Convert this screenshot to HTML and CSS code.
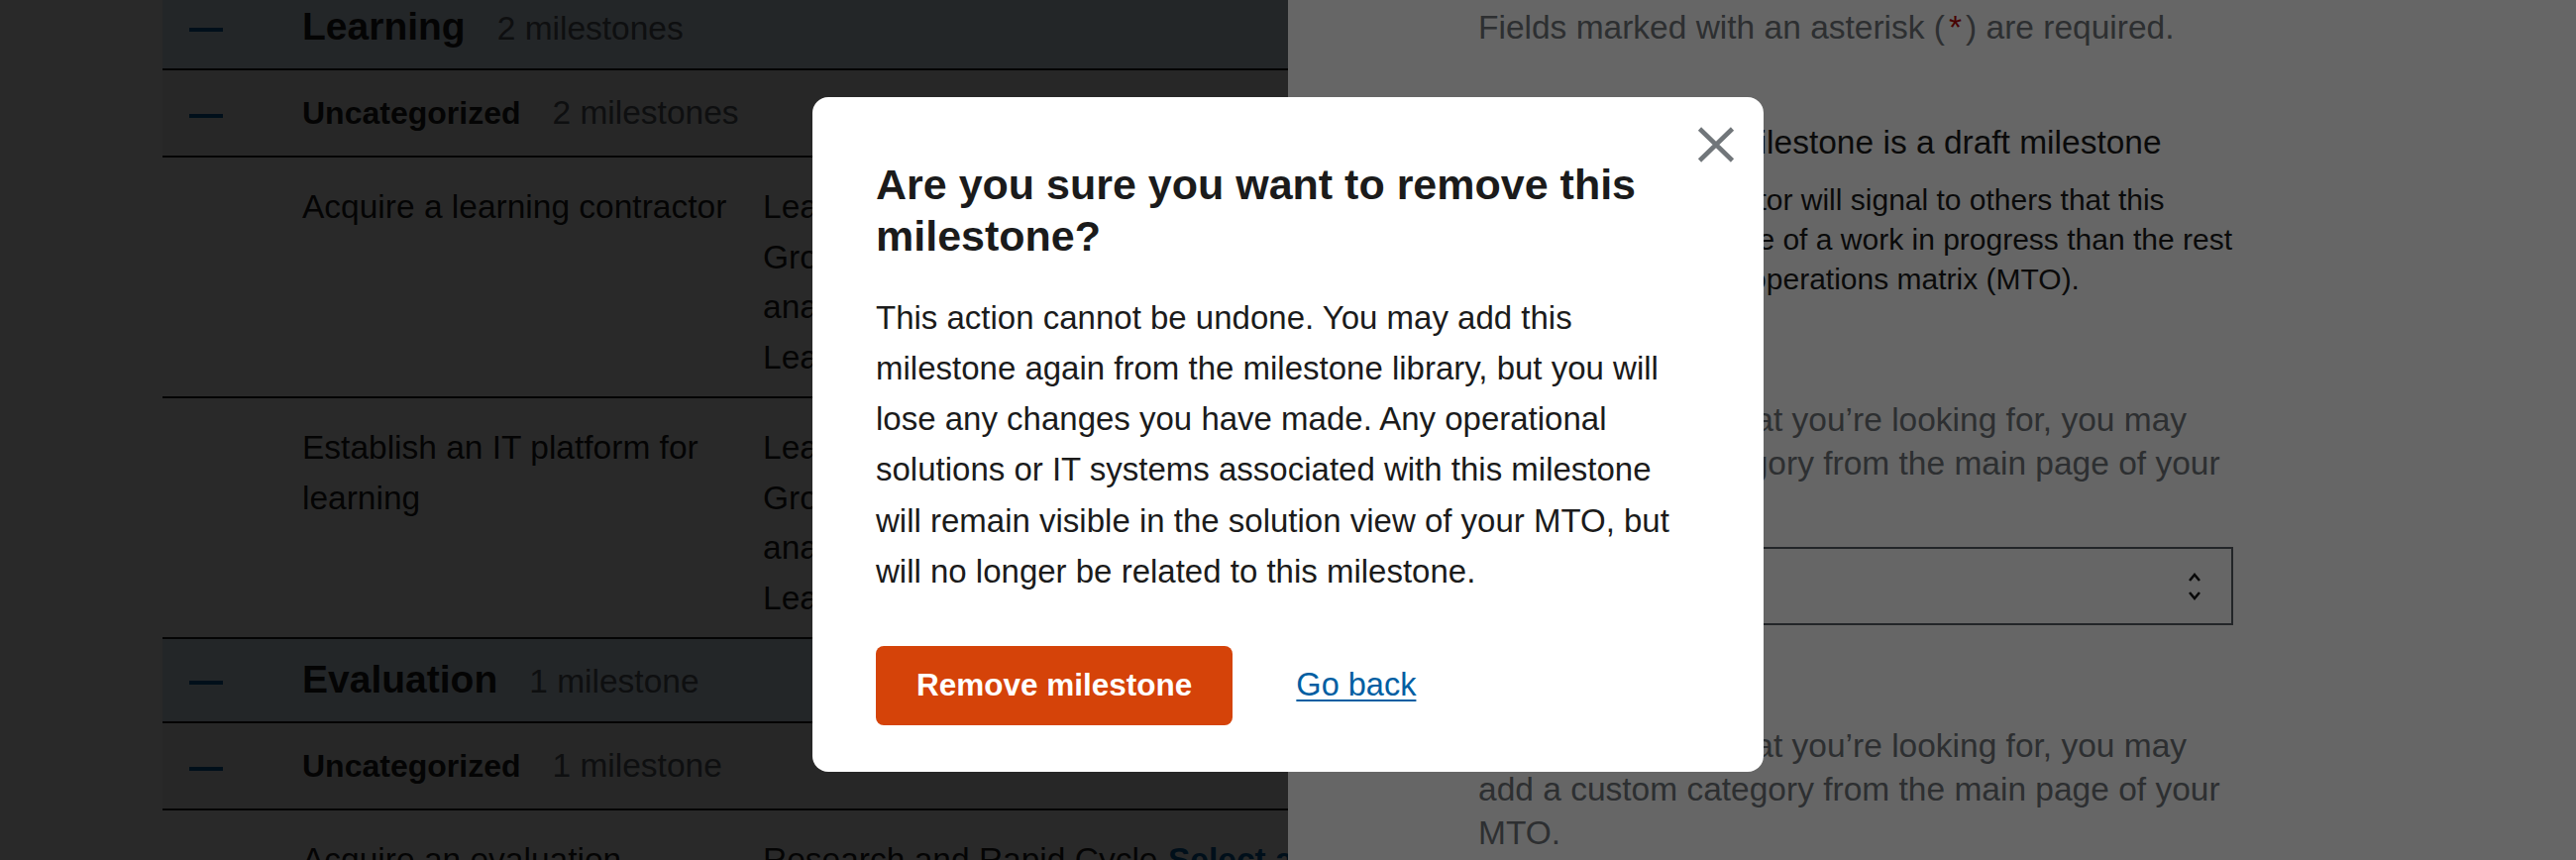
FILE: index.html
```html
<!DOCTYPE html>
<html lang="en">
<head>
<meta charset="utf-8">
<title>Remove milestone</title>
<link rel="stylesheet" href="styles.css">
</head>
<body>
<main class="matrix">
  <section class="category">
    <div class="row cat-row">
      <span class="toggle"></span>
      <div class="row-heading"><h2 class="cat-title">Learning</h2><span class="count">2 milestones</span></div>
    </div>
    <div class="row sub-row">
      <span class="toggle"></span>
      <div class="row-heading"><h3 class="sub-title">Uncategorized</h3><span class="count">2 milestones</span></div>
    </div>
    <div class="row ms-row">
      <span class="ms-gutter"></span>
      <div class="ms-name">Acquire a learning contractor</div>
      <div class="ms-team">Learning and Diffusion<br>Group (LDG), Data<br>analytics contractor,<br>Learning contractor</div>
      <div class="ms-solution"><a class="solution-link" href="#">Select a solution</a></div>
    </div>
    <div class="row ms-row">
      <span class="ms-gutter"></span>
      <div class="ms-name">Establish an IT platform for learning</div>
      <div class="ms-team">Learning and Diffusion<br>Group (LDG), Data<br>analytics contractor,<br>Learning contractor</div>
      <div class="ms-solution"><a class="solution-link" href="#">Select a solution</a></div>
    </div>
  </section>
  <section class="category">
    <div class="row cat-row">
      <span class="toggle"></span>
      <div class="row-heading"><h2 class="cat-title">Evaluation</h2><span class="count">1 milestone</span></div>
    </div>
    <div class="row sub-row">
      <span class="toggle"></span>
      <div class="row-heading"><h3 class="sub-title">Uncategorized</h3><span class="count">1 milestone</span></div>
    </div>
    <div class="row ms-row">
      <span class="ms-gutter"></span>
      <div class="ms-name">Acquire an evaluation contractor</div>
      <div class="ms-team">Research and Rapid Cycle<br>Evaluation Group (RREG)</div>
      <div class="ms-solution"><a class="solution-link" href="#">Select a solution</a></div>
    </div>
  </section>
</main>

<div class="panel-backdrop"></div>

<aside class="panel">
  <div class="panel-body">
    <p class="hint">Fields marked with an asterisk (<abbr class="req" title="required">*</abbr>) are required.</p>

    <div class="checkbox">
      <span class="checkbox-box"></span>
      <div class="checkbox-text">
        <label class="checkbox-label">Check if this milestone is a draft milestone</label>
        <p class="checkbox-desc">Using this indicator will signal to others that this<br>milestone is more of a work in progress than the rest<br>of the model-to-operations matrix (MTO).</p>
      </div>
    </div>

    <div class="field">
      <label class="field-label">Category</label>
      <p class="hint field-hint">If you don’t see what you’re looking for, you may add a custom category from the main page of your MTO.</p>
      <div class="select">
        <span class="select-value">Learning</span>
        <svg class="select-icon" width="14" height="30" viewBox="0 0 14 30" aria-hidden="true"><path d="M2 9 L7 3 L12 9 M2 21 L7 27 L12 21" fill="none" stroke="#1b1b1b" stroke-width="2.6"/></svg>
      </div>
    </div>

    <div class="field">
      <label class="field-label">Sub-category</label>
      <p class="hint field-hint">If you don’t see what you’re looking for, you may add a custom category from the main page of your MTO.</p>
      <div class="select">
        <span class="select-value">Uncategorized</span>
        <svg class="select-icon" width="14" height="30" viewBox="0 0 14 30" aria-hidden="true"><path d="M2 9 L7 3 L12 9 M2 21 L7 27 L12 21" fill="none" stroke="#1b1b1b" stroke-width="2.6"/></svg>
      </div>
    </div>
  </div>
</aside>

<div class="modal-backdrop">
  <div class="modal" role="dialog" aria-labelledby="modal-title">
    <button class="modal-close" type="button" aria-label="Close this window">
      <svg width="38" height="36" viewBox="0 0 38 36" aria-hidden="true"><path d="M2.5 2 L35.5 34 M35.5 2 L2.5 34" fill="none" stroke="#71767a" stroke-width="4.6"/></svg>
    </button>
    <h2 class="modal-title" id="modal-title">Are you sure you want to remove this milestone?</h2>
    <p class="modal-text">This action cannot be undone. You may add this milestone again from the milestone library, but you will lose any changes you have made. Any operational solutions or IT systems associated with this milestone will remain visible in the solution view of your MTO, but will no longer be related to this milestone.</p>
    <div class="modal-actions">
      <button class="btn-danger" type="button">Remove milestone</button>
      <a class="back-link" href="#">Go back</a>
    </div>
  </div>
</div>
</body>
</html>
```

FILE: styles.css
```css
html, body {
  margin: 0;
  padding: 0;
}

body {
  width: 2600px;
  height: 868px;
  overflow: hidden;
  background: #ffffff;
  font-family: "Liberation Sans", Arial, sans-serif;
  color: #1b1b1b;
}

/* ---------- Matrix (page behind) ---------- */
.matrix {
  margin-top: -14px;
  padding: 0 164px;
}

.category {
  margin: 0;
}

.row {
  border-bottom: 2px solid #1b1b1b;
}

.cat-row,
.sub-row {
  display: flex;
  align-items: center;
}

.cat-row {
  height: 83px;
  background: #d9e8f6;
}

.sub-row {
  height: 86px;
  background: #f0f0f0;
}

.toggle {
  flex: none;
  width: 34px;
  height: 4px;
  margin: 5px 80px 0 27px;
  background: #005ea2;
}

.row-heading {
  display: flex;
  align-items: baseline;
  gap: 32px;
}

.cat-title {
  margin: 0;
  font-size: 39px;
  line-height: 1.2;
  font-weight: 700;
}

.sub-title {
  margin: 0;
  font-size: 32px;
  line-height: 1.2;
  font-weight: 700;
}

.count {
  font-size: 33.5px;
  color: #565c65;
}

.ms-row {
  display: grid;
  grid-template-columns: 141px 465px 409px 1fr;
  padding: 25px 0 14px;
  font-size: 33.5px;
  line-height: 50.5px;
}

.ms-name {
  padding-right: 24px;
}

.ms-team {
  padding-right: 8px;
}

.solution-link {
  color: #005ea2;
  font-weight: 700;
  text-decoration: none;
}

/* ---------- Side panel ---------- */
.panel-backdrop {
  position: fixed;
  inset: 0;
  background: rgba(0, 0, 0, 0.6);
}

.panel {
  position: fixed;
  top: 0;
  right: 0;
  width: 1300px;
  height: 100%;
  background: #ffffff;
}

.panel-body {
  width: 762px;
  padding: 6px 0 0 192px;
}

.hint {
  margin: 0;
  font-size: 33.5px;
  line-height: 44px;
  color: #71767a;
}

.req {
  color: #b50909;
  text-decoration: none;
  padding: 0 4px;
}

.checkbox {
  display: flex;
  margin-top: 72px;
}

.checkbox-box {
  flex: none;
  width: 32px;
  height: 32px;
  margin: 6px 32px 0 0;
  border: 2px solid #1b1b1b;
  box-sizing: border-box;
  border-radius: 2px;
}

.checkbox-label {
  display: block;
  font-size: 33.5px;
  line-height: 44px;
  color: #1b1b1b;
}

.checkbox-desc {
  margin: 16px 0 0;
  font-size: 30px;
  line-height: 40px;
  color: #1b1b1b;
}

.field {
  margin-top: 40px;
}

.field-label {
  display: block;
  font-size: 33.5px;
  line-height: 44px;
  color: #1b1b1b;
}

.field-hint {
  margin-top: 16px;
}

.select {
  display: flex;
  align-items: center;
  justify-content: space-between;
  box-sizing: border-box;
  height: 79px;
  margin-top: 18px;
  padding: 0 30px 0 20px;
  border: 2px solid #565c65;
  font-size: 33.5px;
}

/* ---------- Modal ---------- */
.modal-backdrop {
  position: fixed;
  inset: 0;
  display: flex;
  justify-content: center;
  align-items: flex-start;
  padding-top: 98px;
  background: rgba(0, 0, 0, 0.6);
}

.modal {
  position: relative;
  box-sizing: border-box;
  width: 960px;
  padding: 63px 64px 47px;
  background: #ffffff;
  border-radius: 16px;
}

.modal-close {
  position: absolute;
  top: 30px;
  right: 29px;
  width: 38px;
  height: 36px;
  padding: 0;
  border: 0;
  background: transparent;
}

.modal-close svg {
  display: block;
}

.modal-title {
  margin: 0;
  font-size: 43px;
  line-height: 51.6px;
  font-weight: 700;
  color: #1b1b1b;
}

.modal-text {
  margin: 30.5px 0 0;
  font-size: 33px;
  line-height: 51.2px;
  color: #1b1b1b;
}

.modal-actions {
  display: flex;
  align-items: center;
  gap: 64px;
  margin-top: 50px;
}

.btn-danger {
  height: 80px;
  padding: 0 41px;
  border: 0;
  border-radius: 8px;
  background: #d54309;
  color: #ffffff;
  font-family: "Liberation Sans", Arial, sans-serif;
  font-size: 31.5px;
  font-weight: 700;
}

.back-link {
  font-size: 32.5px;
  color: #005ea2;
  text-decoration: underline;
  text-decoration-thickness: 2px;
  text-underline-offset: 4px;
}
```
